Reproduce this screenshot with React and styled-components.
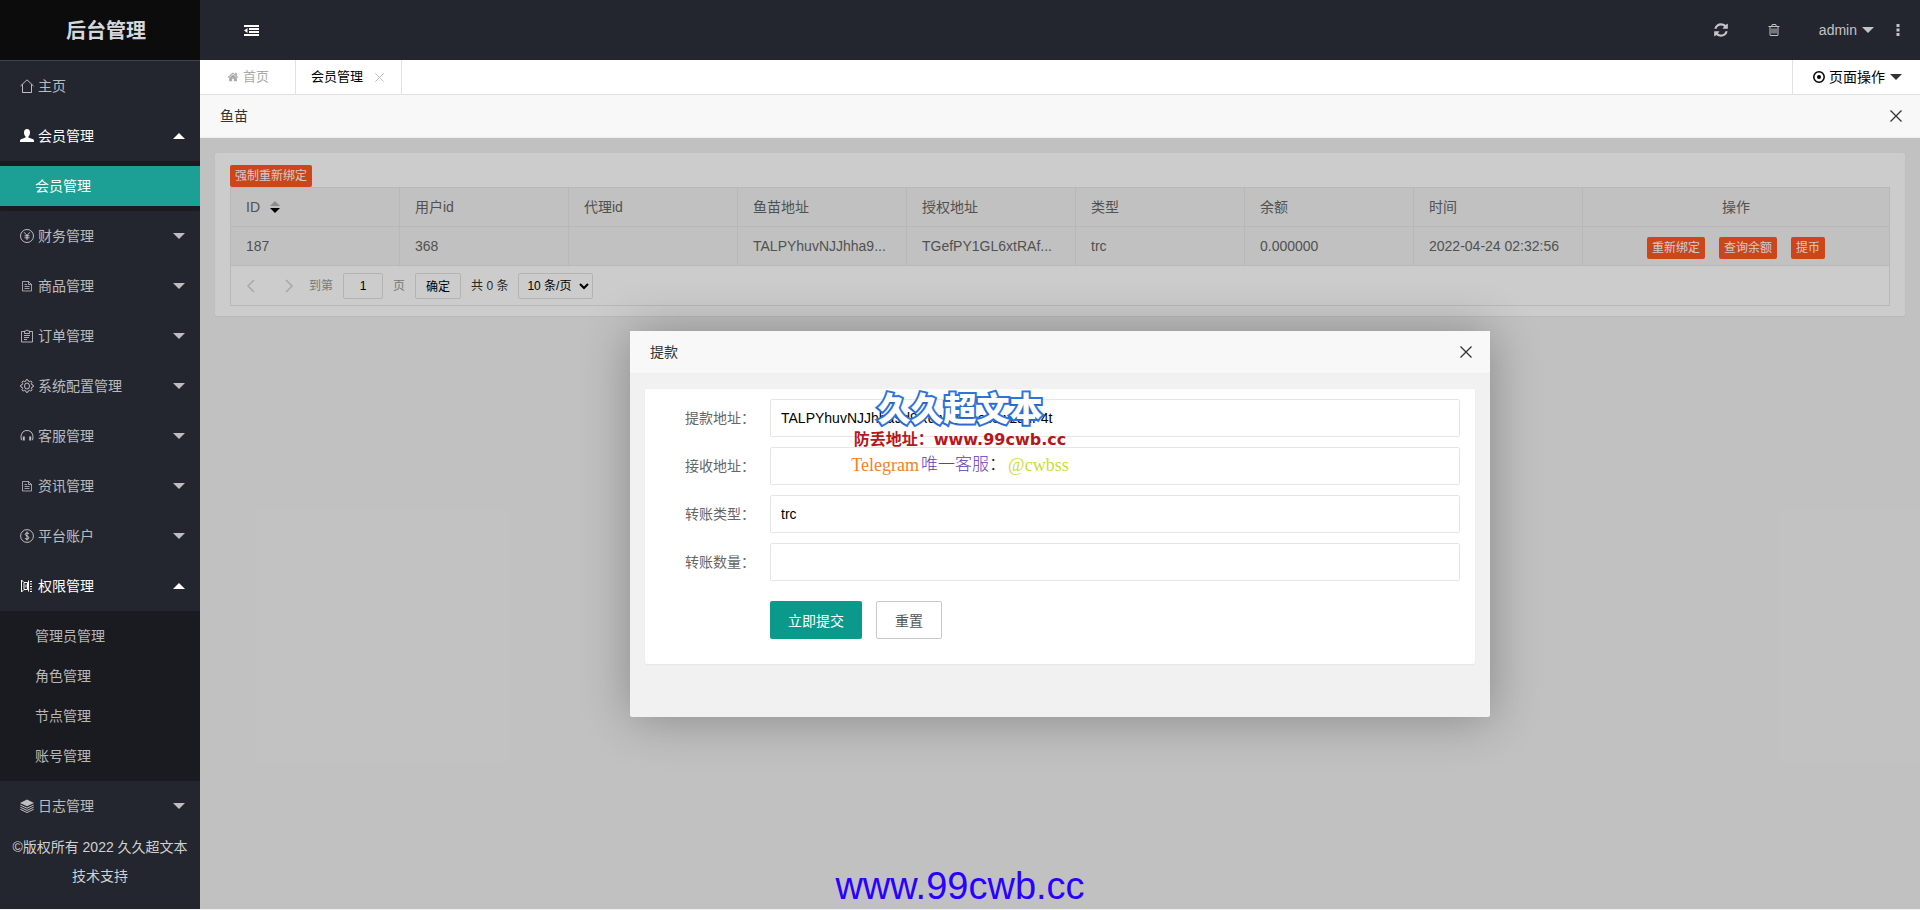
import React, { useState } from 'react';
import styled, { createGlobalStyle, css } from 'styled-components';

const GlobalStyle = createGlobalStyle`
    * {
        box-sizing: border-box;
    }

    body {
        margin: 0;
        background: #f2f2f2;
        color: #333;
        font-family: "Liberation Sans", "Noto Sans CJK SC", sans-serif;
        font-size: 14px;
        line-height: 24px;
    }

    a {
        color: inherit;
        text-decoration: none;
    }

    button, input, select {
        margin: 0;
        font-family: inherit;
        outline: none;
    }

    button {
        cursor: pointer;
    }

    svg {
        display: block;
        flex: none;
    }
`;

const Shell = styled.div`
    position: relative;
    display: flex;
    min-height: 100vh;
    border-bottom: 1px solid #f2f2f2;
`;

/* ---------- sidebar ---------- */

const Sidebar = styled.aside`
    flex: none;
    width: 200px;
    background: #23262e;
    color: rgba(255, 255, 255, .7);
`;

const Logo = styled.h1`
    height: 61px;
    margin: 0;
    padding-left: 12px;
    border-bottom: 1px solid #3e434f;
    background: #0c0c0c;
    color: #d5d7dd;
    font-size: 20px;
    line-height: 62px;
    text-align: center;
`;

const MenuLink = styled.a`
    display: flex;
    align-items: center;
    gap: 4px;
    height: 50px;
    padding: 0 15px 0 20px;
    color: ${({ $open }) => ($open ? '#fff' : 'inherit')};
`;

const Caret = styled.i`
    border: 6px solid transparent;
    border-bottom-width: ${({ $up }) => ($up ? '6px' : '0')};
    border-top-width: ${({ $up }) => ($up ? '0' : '6px')};
    border-top-color: ${({ $up }) => ($up ? 'transparent' : 'currentColor')};
    border-bottom-color: ${({ $up }) => ($up ? 'currentColor' : 'transparent')};
`;

const MenuCaret = styled(Caret)`
    margin-left: auto;
`;

const SubMenu = styled.div`
    padding: 5px 0;
    border-radius: 2px;
    background: #191b20;
`;

const SubLink = styled.a`
    display: block;
    padding-left: 35px;
    line-height: 40px;
    ${({ $active }) => $active && css`
        background: #1ca095;
        color: #fff;
    `}
`;

const Copyright = styled.p`
    margin: 0;
    padding: 2px 10px;
    color: #d0d1d3;
    line-height: 29px;
    text-align: center;
`;

/* ---------- top bars ---------- */

const Main = styled.main`
    display: flex;
    flex: 1;
    flex-direction: column;
    min-width: 0;
`;

const Header = styled.header`
    display: flex;
    align-items: center;
    height: 60px;
    padding: 0 20px 0 44px;
    background: #23262e;
    color: #c3c4c7;
`;

const IconButton = styled.button`
    padding: 0;
    border: 0;
    background: none;
    color: ${({ $color }) => $color || 'inherit'};
`;

const HeaderTools = styled.div`
    display: flex;
    align-items: center;
    gap: 38px;
    margin-left: auto;
`;

const UserLink = styled.a`
    display: flex;
    align-items: center;
    gap: 5px;
    margin-right: -16px;
`;

const TabBar = styled.nav`
    display: flex;
    height: 35px;
    border-bottom: 1px solid #e2e2e2;
    background: #fff;
    color: #000;
`;

const Tab = styled.div`
    display: flex;
    align-items: center;
    gap: ${({ $home }) => ($home ? '4px' : '12px')};
    padding: 0 ${({ $home }) => ($home ? '26px' : '17px')} 0 ${({ $home }) => ($home ? '27px' : '15px')};
    border-right: 1px solid #e2e2e2;
    color: ${({ $home }) => ($home ? '#aaa' : '#000')};
    font-size: 13px;
`;

const PageAction = styled.a`
    display: flex;
    align-items: center;
    gap: 4px;
    margin-left: auto;
    padding: 0 18px 0 20px;
    border-left: 1px solid #e2e2e2;

    ${Caret} {
        margin-left: 1px;
        color: #333;
    }
`;

const TitleBar = styled.div`
    display: flex;
    align-items: center;
    justify-content: space-between;
    height: 43px;
    padding: 0 18px 0 20px;
    border-bottom: 1px solid #eee;
    background: #f8f8f8;
`;

/* ---------- list page ---------- */

const Content = styled.section`
    position: relative;
    flex: 1;
    padding: 15px;
    overflow: hidden;
    background: #f2f2f2;
`;

const Card = styled.div`
    border-radius: 2px;
    background: #fff;
    box-shadow: 0 1px 2px rgba(0, 0, 0, .05);
`;

const ListCard = styled(Card)`
    padding: 12px 15px 10px;
`;

const TinyButton = styled.button`
    display: block;
    height: 22px;
    padding: 0 5px;
    border: 0;
    border-radius: 2px;
    background: #ff5722;
    color: #fff;
    font-size: 12px;
    line-height: 22px;
`;

const TableView = styled.div`
    border: 1px solid #e6e6e6;
    color: #666;
`;

const Table = styled.table`
    width: 100%;
    border-spacing: 0;
    table-layout: fixed;

    th, td {
        width: 169px;
        height: 39px;
        padding: 0 15px;
        border: solid #e6e6e6;
        border-width: 0 1px 1px 0;
        background: #f2f2f2;
        font-weight: 400;
        text-align: left;
        white-space: nowrap;
    }

    th:last-child, td:last-child {
        width: auto;
        border-right: 0;
        text-align: center;
    }
`;

const SortHead = styled.span`
    display: flex;
    align-items: center;
    gap: 10px;
`;

const RowActions = styled.div`
    display: flex;
    justify-content: center;
    gap: 14px;
    padding-top: 3px;
`;

const Pager = styled.div`
    display: flex;
    align-items: center;
    gap: 10px;
    height: 39px;
    padding-left: 15px;
    color: #999;
    font-size: 12px;
`;

const PagerArrows = styled.div`
    display: flex;
    gap: 28px;
    margin-right: 5px;
`;

const pagerBox = css`
    height: 26px;
    border: 1px solid #e2e2e2;
    border-radius: 2px;
    background: #fff;
    color: #000;
    font-size: 12px;
`;

const PagerInput = styled.input`
    ${pagerBox}
    width: 40px;
    padding: 0 3px;
    text-align: center;
`;

const PagerButton = styled.button`
    ${pagerBox}
    padding: 0 10px;
`;

const PagerTotal = styled.span`
    color: #333;
`;

const PagerSelect = styled.select`
    ${pagerBox}
    width: 75px;
    padding: 0 4px;
`;

/* ---------- dialog ---------- */

const Shade = styled.div`
    position: absolute;
    inset: 0;
    display: flex;
    align-items: center;
    justify-content: center;
    padding-top: 1px;
    background: rgba(0, 0, 0, .2);
`;

const Dialog = styled.div`
    width: 50%;
    min-height: 386px;
    border-radius: 2px;
    background: #f1f1f1;
    box-shadow: 1px 1px 50px rgba(0, 0, 0, .3);
`;

const FormCard = styled(Card)`
    margin: 15px;
    padding: 10px 15px 25px;
`;

const Field = styled.div`
    display: flex;
    margin-bottom: 10px;
`;

const Label = styled.label`
    width: 110px;
    padding-right: 15px;
    color: #666;
    line-height: 38px;
    text-align: right;
`;

const TextInput = styled.input`
    flex: 1;
    min-width: 0;
    height: 38px;
    padding: 0 10px;
    border: 1px solid #e6e6e6;
    border-radius: 2px;
    background: #fff;
    color: #000;
    font-size: 14px;
`;

const FormButtons = styled.div`
    display: flex;
    gap: 14px;
    padding: 10px 0 0 110px;
`;

const FormButton = styled.button`
    height: 38px;
    padding: 0 18px;
    border: ${({ $primary }) => ($primary ? '0' : '1px solid #c9c9c9')};
    border-radius: 2px;
    background: ${({ $primary }) => ($primary ? '#0b998c' : '#fff')};
    color: ${({ $primary }) => ($primary ? '#fff' : '#555')};
    font-size: 14px;
`;

/* ---------- site marks over the page ---------- */

const Promo = styled.div`
    position: absolute;
    top: 390px;
    left: 0;
    right: 0;
    display: flex;
    flex-direction: column;
    align-items: center;
    pointer-events: none;
`;

const PromoName = styled.strong`
    color: #fff;
    font-size: 33px;
    font-weight: 900;
    line-height: 39px;
    -webkit-text-stroke: 4px #2f74dc;
    paint-order: stroke fill;
    text-shadow: -1px 1px 1px #2563c4;
`;

const PromoSite = styled.span`
    color: #b5171b;
    font-family: "DejaVu Sans", "Noto Sans CJK SC", sans-serif;
    font-size: 16px;
    font-weight: 700;
    line-height: 22px;
`;

const PromoContact = styled.span`
    display: flex;
    gap: 2px;
    margin-top: 4px;
    color: #f5811f;
    font-family: "Liberation Serif", "Noto Sans CJK SC", serif;
    font-size: 18px;
    line-height: 20px;
`;

const PromoService = styled.span`
    color: #6339b5;
    font-size: 17px;
    font-weight: 300;
`;

const PromoColon = styled.span`
    color: #222;
`;

const PromoHandle = styled.span`
    color: #cddc39;
`;

const SiteMark = styled.div`
    position: absolute;
    bottom: 1px;
    left: 0;
    right: 0;
    color: #2a00ff;
    font-size: 38px;
    line-height: 44px;
    text-align: center;
    pointer-events: none;
`;

/* ---------- icons ---------- */

const Line = ({ size = 14, children }) => (
    <svg width={size} height={size} viewBox="0 0 14 14" fill="none" stroke="currentColor" strokeWidth="1">
        {children}
    </svg>
);

const Solid = ({ size, d }) => (
    <svg width={size} height={size} viewBox="0 0 1792 1792" fill="currentColor"><path d={d} /></svg>
);

const homePath = 'M1472 992v480q0 26-19 45t-45 19h-384v-384h-256v384h-384q-26 0-45-19t-19-45v-480q0-1 .5-3t.5-3l575-474 575 474q1 2 1 6zm223-69l-62 74q-8 9-21 11h-3q-13 0-21-7l-692-577-692 577q-12 8-24 7-13-2-21-11l-62-74q-8-10-7-23.5t11-21.5l719-599q32-26 76-26t76 26l244 204v-195q0-14 9-23t23-9h192q14 0 23 9t9 23v408l219 182q10 8 11 21.5t-7 23.5z';
const refreshPath = 'M1639 1056q0 5-1 7-64 268-268 434.5t-478 166.5q-146 0-282.5-55t-243.5-157l-129 129q-19 19-45 19t-45-19-19-45v-448q0-26 19-45t45-19h448q26 0 45 19t19 45-19 45l-137 137q71 66 161 102t187 36q134 0 250-65t186-179q11-17 53-117 8-23 30-23h192q13 0 22.5 9.5t9.5 22.5zm25-800v448q0 26-19 45t-45 19h-448q-26 0-45-19t-19-45 19-45l138-138q-148-137-349-137-134 0-250 65t-186 179q-11 17-53 117-8 23-30 23h-199q-13 0-22.5-9.5t-9.5-22.5v-7q65-268 270-434.5t480-166.5q146 0 284 55.5t245 156.5l130-129q19-19 45-19t45 19 19 45z';
const trashPath = 'M704 736v576q0 14-9 23t-23 9h-64q-14 0-23-9t-9-23v-576q0-14 9-23t23-9h64q14 0 23 9t9 23zm256 0v576q0 14-9 23t-23 9h-64q-14 0-23-9t-9-23v-576q0-14 9-23t23-9h64q14 0 23 9t9 23zm256 0v576q0 14-9 23t-23 9h-64q-14 0-23-9t-9-23v-576q0-14 9-23t23-9h64q14 0 23 9t9 23zm128 724v-948h-896v948q0 22 7 40.5t14.5 27 10.5 8.5h832q3 0 10.5-8.5t14.5-27 7-40.5zm-672-1076h448l-48-117q-7-9-17-11h-317q-10 2-17 11zm928 32v64q0 14-9 23t-23 9h-96v948q0 83-47 143.5t-113 60.5h-832q-66 0-113-58.5t-47-141.5v-952h-96q-14 0-23-9t-9-23v-64q0-14 9-23t23-9h309l70-167q15-37 54-63t79-26h320q40 0 79 26t54 63l70 167h309q14 0 23 9t9 23z';

const icons = {
    home: <Line><path d="M.5 7L7 .8 13.5 7M2.5 5.5v8h9v-8" /></Line>,
    user: (
        <Line>
            <path fill="currentColor" stroke="none" d="M7 0c2 0 3 1.400 3 3.400 0 1.700-.6 3-1.400 3.900-.3.500-.2 1.300.3 1.500l3.600 1.300c1 .4 1.500 1 1.500 1.900v1H0v-1c0-.9.500-1.500 1.500-1.900l3.600-1.300c.5-.2.600-1 .3-1.500C4.600 6.400 4 5.100 4 3.400 4 1.400 5 0 7 0z" />
        </Line>
    ),
    yen: <Line><circle cx="7" cy="7" r="6.500" /><path d="M4.200 3.300L7 6.500l2.800-3.200M7 6.500v4.500M4.500 6.800h5M4.500 8.800h5" /></Line>,
    file: <Line><path strokeWidth=".8" d="M2.500 2.500h6l3 3v6.500h-9zM8.500 2.500v3h3M4.500 5.500h2.500M4.500 7.500h5M4.500 9.500h5" /></Line>,
    order: <Line><path strokeWidth=".9" d="M4 2.500H1.500v10.500h11V2.500H10M4.500 4.500v-2.500h1.500L7 .8l1 1.200h1.500v2.500zM4 6.500h6M4 8.500h5M4 10.500h3" /></Line>,
    gear: (
        <Line>
            <ellipse cx="7" cy="7" rx="2.500" ry="3" />
            <path strokeLinejoin="round" d="M5.700 2.200Q5.700.5 7 .5t1.300 1.700q.5.300 1 .5Q10.700 1.600 11.600 2.500t-.3 2.200l.5 1q1.700 0 1.700 1.300t-1.700 1.300l-.5 1q1.200 1.300.3 2.200t-2.300-.2l-1 .5Q8.300 13.500 7 13.500t-1.300-1.700l-1-.5Q3.300 12.400 2.400 11.500t.3-2.200l-.5-1Q.5 8.300.5 7t1.700-1.300l.5-1Q1.500 3.400 2.400 2.500t2.300.2z" />
        </Line>
    ),
    service: <Line><path d="M1.500 11.200C-.2 5 3 1.500 7 1.500s7.200 3.500 5.500 9.700" /><path strokeWidth="2" d="M3.800 7.500v4M10.200 7.500v4" /></Line>,
    dollar: <Line><circle cx="7" cy="7" r="6.400" /><path d="M9 5C8.600 3.600 5.200 3.500 5.200 5.300S9 6.900 9 8.800 5.200 10.500 4.900 9M7 2.500v9" /></Line>,
    auth: (
        <Line>
            <path d="M1.500 1v12M1.500 1.500l2 1M1.500 12.500l2-1M4 3.500h3.500v7H4zM8.500 1.500v11M6 5.500v3" />
            <path strokeDasharray="2 1" d="M10 2.500h3M10 5h3M10 7.500h3M10 10h3M10 12.500h3" />
        </Line>
    ),
    layers: (
        <Line>
            <path fill="currentColor" stroke="none" d="M7 .5L14 4 7 7.300 0 4z" />
            <path d="M.3 6L7 9.200 13.700 6M.3 8.200L7 11.400l6.700-3.200M.3 10.300L7 13.500l6.700-3.200" />
        </Line>
    ),
};

const CrossIcon = ({ size = 12, weight = 1.3 }) => (
    <svg width={size} height={size} viewBox="0 0 12 12" stroke="currentColor" strokeWidth={weight}>
        <path d="M.5.5l11 11M11.500.5L.5 11.500" />
    </svg>
);

const ShrinkIcon = () => (
    <svg width="15" height="11" viewBox="0 0 15 11" fill="currentColor">
        <path d="M0 0h15v2H0zM5 3h10v2H5zM5 6h10v2H5zM0 9h15v2H0zM0 5.500L3.500 3v5z" />
    </svg>
);

const DotsIcon = () => (
    <svg width="4" height="12" viewBox="0 0 4 12" fill="currentColor"><path d="M.5 0h3v3h-3zM.5 4.500h3v3h-3zM.5 9h3v3h-3z" /></svg>
);

const TargetIcon = () => (
    <svg width="12" height="12" viewBox="0 0 12 12">
        <circle cx="6" cy="6" r="5.200" fill="none" stroke="currentColor" strokeWidth="1.500" />
        <circle cx="6" cy="6" r="2" fill="currentColor" />
    </svg>
);

const SortIcon = () => (
    <svg width="10" height="12" viewBox="0 0 10 12">
        <path d="M5 0l5 5H0z" fill="#b2b2b2" />
        <path d="M5 12L0 7h10z" fill="#000" />
    </svg>
);

const ArrowIcon = ({ right }) => (
    <svg width="10" height="14" viewBox="0 0 10 14" fill="none" stroke="#d2d2d2" strokeWidth="1.500">
        <path d={right ? 'M2 1l6 6-6 6' : 'M8 1L2 7l6 6'} />
    </svg>
);

const menu = [
    { icon: 'home', name: '主页' },
    { icon: 'user', name: '会员管理', children: ['会员管理'], active: '会员管理' },
    { icon: 'yen', name: '财务管理', more: true },
    { icon: 'file', name: '商品管理', more: true },
    { icon: 'order', name: '订单管理', more: true },
    { icon: 'gear', name: '系统配置管理', more: true },
    { icon: 'service', name: '客服管理', more: true },
    { icon: 'file', name: '资讯管理', more: true },
    { icon: 'dollar', name: '平台账户', more: true },
    { icon: 'auth', name: '权限管理', children: ['管理员管理', '角色管理', '节点管理', '账号管理'] },
    { icon: 'layers', name: '日志管理', more: true },
];

const heads = ['用户id', '代理id', '鱼苗地址', '授权地址', '类型', '余额', '时间', '操作'];
const row = ['187', '368', '', 'TALPYhuvNJJhha9...', 'TGefPY1GL6xtRAf...', 'trc', '0.000000', '2022-04-24 02:32:56'];

const fields = [
    { name: 'from', label: '提款地址：' },
    { name: 'to', label: '接收地址：' },
    { name: 'type', label: '转账类型：' },
    { name: 'amount', label: '转账数量：' },
];

function SideMenu() {
    return (
        <Sidebar>
            <Logo>后台管理</Logo>
            <nav>
                {menu.map((item, i) => (
                    <div key={i}>
                        <MenuLink href="#" $open={!!item.children}>
                            {icons[item.icon]}
                            {item.name}
                            {(item.more || item.children) && <MenuCaret $up={!!item.children} />}
                        </MenuLink>
                        {item.children && (
                            <SubMenu>
                                {item.children.map(name => (
                                    <SubLink key={name} href="#" $active={item.active === name}>{name}</SubLink>
                                ))}
                            </SubMenu>
                        )}
                    </div>
                ))}
            </nav>
            <Copyright>©版权所有 2022 久久超文本技术支持</Copyright>
        </Sidebar>
    );
}

function FishList() {
    return (
        <ListCard>
            <TinyButton>强制重新绑定</TinyButton>
            <TableView>
                <Table>
                    <thead>
                        <tr>
                            <th><SortHead>ID<SortIcon /></SortHead></th>
                            {heads.map(name => <th key={name}>{name}</th>)}
                        </tr>
                    </thead>
                    <tbody>
                        <tr>
                            {row.map((value, i) => <td key={i}>{value}</td>)}
                            <td>
                                <RowActions>
                                    <TinyButton>重新绑定</TinyButton>
                                    <TinyButton>查询余额</TinyButton>
                                    <TinyButton>提币</TinyButton>
                                </RowActions>
                            </td>
                        </tr>
                    </tbody>
                </Table>
                <Pager>
                    <PagerArrows>
                        <IconButton aria-label="上一页"><ArrowIcon /></IconButton>
                        <IconButton aria-label="下一页"><ArrowIcon right /></IconButton>
                    </PagerArrows>
                    <label htmlFor="page">到第</label>
                    <PagerInput id="page" defaultValue="1" />
                    <span>页</span>
                    <PagerButton>确定</PagerButton>
                    <PagerTotal>共 0 条</PagerTotal>
                    <PagerSelect aria-label="每页条数">
                        <option>10 条/页</option>
                        <option>20 条/页</option>
                    </PagerSelect>
                </Pager>
            </TableView>
        </ListCard>
    );
}

function WithdrawDialog({ onClose }) {

    const initialState = {
        from: 'TALPYhuvNJJhha9d9RdwXhkaecsw2JdF4t',
        to: '',
        type: 'trc',
        amount: '',
    };

    const [state, setState] = useState(initialState);

    const _ChangeValue = e => {
        const { name, value } = e.target;

        setState({
            ...state,
            [name]: value,
        });
    };

    return (
        <Shade>
            <Dialog role="dialog" aria-label="提款">
                <TitleBar>
                    <span>提款</span>
                    <IconButton aria-label="关闭" onClick={onClose}><CrossIcon /></IconButton>
                </TitleBar>
                <FormCard as="form" onSubmit={e => e.preventDefault()}>
                    {fields.map(({ name, label }) => (
                        <Field key={name}>
                            <Label htmlFor={name}>{label}</Label>
                            <TextInput id={name} name={name} value={state[name]} onChange={_ChangeValue} />
                        </Field>
                    ))}
                    <FormButtons>
                        <FormButton $primary type="submit">立即提交</FormButton>
                        <FormButton type="button" onClick={() => setState(initialState)}>重置</FormButton>
                    </FormButtons>
                </FormCard>
            </Dialog>
        </Shade>
    );
}

function App() {

    const [visible, setVisible] = useState(true);

    return (
        <Shell>
            <GlobalStyle />
            <SideMenu />
            <Main>
                <Header>
                    <IconButton $color="#fff" aria-label="收起菜单"><ShrinkIcon /></IconButton>
                    <HeaderTools>
                        <IconButton aria-label="刷新"><Solid size={16} d={refreshPath} /></IconButton>
                        <IconButton aria-label="清理缓存"><Solid size={14} d={trashPath} /></IconButton>
                        <UserLink href="#">admin<Caret /></UserLink>
                        <IconButton aria-label="更多"><DotsIcon /></IconButton>
                    </HeaderTools>
                </Header>
                <TabBar>
                    <Tab $home><Solid size={12} d={homePath} />首页</Tab>
                    <Tab>
                        会员管理
                        <IconButton $color="#bbb" aria-label="关闭标签"><CrossIcon size={9} /></IconButton>
                    </Tab>
                    <PageAction href="#"><TargetIcon />页面操作<Caret /></PageAction>
                </TabBar>
                <TitleBar>
                    <span>鱼苗</span>
                    <IconButton aria-label="关闭"><CrossIcon /></IconButton>
                </TitleBar>
                <Content>
                    <FishList />
                    {visible && <WithdrawDialog onClose={() => setVisible(false)} />}
                </Content>
            </Main>
            <Promo>
                <PromoName>久久超文本</PromoName>
                <PromoSite>防丢地址：www.99cwb.cc</PromoSite>
                <PromoContact>
                    Telegram
                    <PromoService>唯一客服<PromoColon>：</PromoColon></PromoService>
                    <PromoHandle>@cwbss</PromoHandle>
                </PromoContact>
            </Promo>
            <SiteMark>www.99cwb.cc</SiteMark>
        </Shell>
    );
}

export default App;
